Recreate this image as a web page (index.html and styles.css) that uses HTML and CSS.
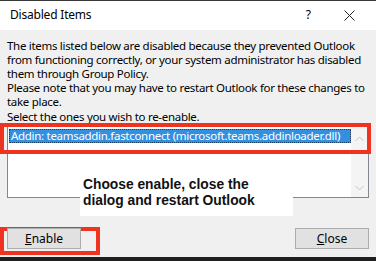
FILE: index.html
```html
<!DOCTYPE html>
<html lang="en">
<head>
	<meta charset="utf-8">
	<title>Disabled Items</title>
	<link rel="stylesheet" href="styles.css">
</head>
<body>
	<div class="dialog">
		<div class="titlebar">
			<span class="title">Disabled Items</span>
			<span class="help">?</span>
			<svg class="close-x" width="11" height="11" viewBox="0 0 11 11">
				<path d="M0.5 0.5 L10.5 10.5 M10.5 0.5 L0.5 10.5" stroke="#222" stroke-width="1" fill="none"/>
			</svg>
		</div>

		<div class="content">
			<p class="intro">The items listed below are disabled because they prevented Outlook<br>from functioning correctly, or your system administrator has disabled<br>them through Group Policy.</p>
			<p class="note">Please note that you may have to restart Outlook for these changes to<br>take place.</p>
			<p class="select">Select the ones you wish to re-enable.</p>

			<div class="list-area">
				<div class="listbox">
					<div class="items">
						<div class="item selected">Addin: teamsaddin.fastconnect (microsoft.teams.addinloader.dll)</div>
					</div>
					<div class="scrollbar">
						<svg width="9" height="6" viewBox="0 0 9 6"><path d="M0.5 5 L4.5 1 L8.5 5" stroke="#c4c4c4" fill="none"/></svg>
						<svg width="9" height="6" viewBox="0 0 9 6"><path d="M0.5 1 L4.5 5 L8.5 1" stroke="#c4c4c4" fill="none"/></svg>
					</div>
				</div>
				<div class="mark mark-item"></div>
				<div class="callout">Choose enable, close the<br>dialog and restart Outlook</div>
			</div>

			<div class="buttons">
				<button class="btn"><u>E</u>nable</button>
				<button class="btn"><u>C</u>lose</button>
			</div>
			<div class="mark mark-enable"></div>
		</div>

		<div class="taskbar"></div>
	</div>
</body>
</html>
```

FILE: styles.css
```css
body {
	margin: 0;
	padding: 0;
	font-family: 'Noto Sans', 'Open Sans', sans-serif;
	font-size: 12px;
	color: #000;
	background-color: #f0f0f0;
}

.dialog {
	width: 376px;
	height: 261px;
	display: flex;
	flex-direction: column;
	overflow: hidden;
}

.titlebar {
	height: 29px;
	border-top: 1px solid #3a3a3a;
	background-color: #fff;
	display: flex;
	align-items: center;
	padding: 0 0 0 10px;
}

.title {
	flex: 1;
	font-size: 12px;
	letter-spacing: -0.2px;
	padding-bottom: 2px;
}

.help {
	font-size: 12px;
	margin-right: 33px;
	padding-bottom: 2px;
}

.close-x {
	margin-right: 21px;
	margin-bottom: 1px;
}

.content {
	flex: 1;
	position: relative;
	padding: 9px 7px 0 7px;
	background-color: #f0f0f0;
}

.content p {
	margin: 0;
	font-size: 11.5px;
	line-height: 14px;
	letter-spacing: -0.3px;
	white-space: nowrap;
}

.select {
	padding-top: 1px;
}

.list-area {
	position: relative;
	margin-top: 2px;
}

.listbox {
	height: 70px;
	background-color: #fff;
	border: 1px solid #828790;
	display: flex;
}

.items {
	flex: 1;
	min-width: 0;
	padding: 2px 0 0 1px;
}

.item {
	height: 14px;
	line-height: 13px;
	padding-left: 2px;
	font-size: 11.5px;
	letter-spacing: -0.3px;
	white-space: nowrap;
	overflow: hidden;
}

.item.selected {
	background-color: #3390e0;
	color: #fff;
	outline: 1px dotted #1c3f66;
	outline-offset: -1px;
}

.scrollbar {
	width: 17px;
	background-color: #f4f4f4;
	display: flex;
	flex-direction: column;
	justify-content: space-between;
	align-items: center;
	padding: 9px 0 6px 0;
}

.mark {
	position: absolute;
	border: 4px solid #ee3420;
	pointer-events: none;
}

.mark-item {
	left: -7px;
	top: -3px;
	width: 363px;
	height: 23px;
}

.callout {
	position: absolute;
	left: 73px;
	top: 48px;
	width: 213px;
	height: 42px;
	padding: 3px 0 0 3px;
	box-sizing: border-box;
	background-color: #fff;
	font-family: 'Liberation Sans', Arial, sans-serif;
	font-weight: bold;
	font-size: 13.8px;
	line-height: 16px;
	color: #111;
}

.buttons {
	display: flex;
	justify-content: space-between;
	margin-top: 30px;
}

.btn {
	position: relative;
	z-index: 2;
	width: 74px;
	height: 21px;
	padding: 0;
	font-family: 'Noto Sans', 'Open Sans', sans-serif;
	font-size: 12px;
	color: #000;
	background-color: #e1e1e1;
	border: 1px solid #adadad;
	border-radius: 0;
}

.mark-enable {
	left: 0;
	top: 197px;
	width: 92px;
	height: 20px;
}

.taskbar {
	height: 4px;
	background-color: #1f1f1f;
}
```
